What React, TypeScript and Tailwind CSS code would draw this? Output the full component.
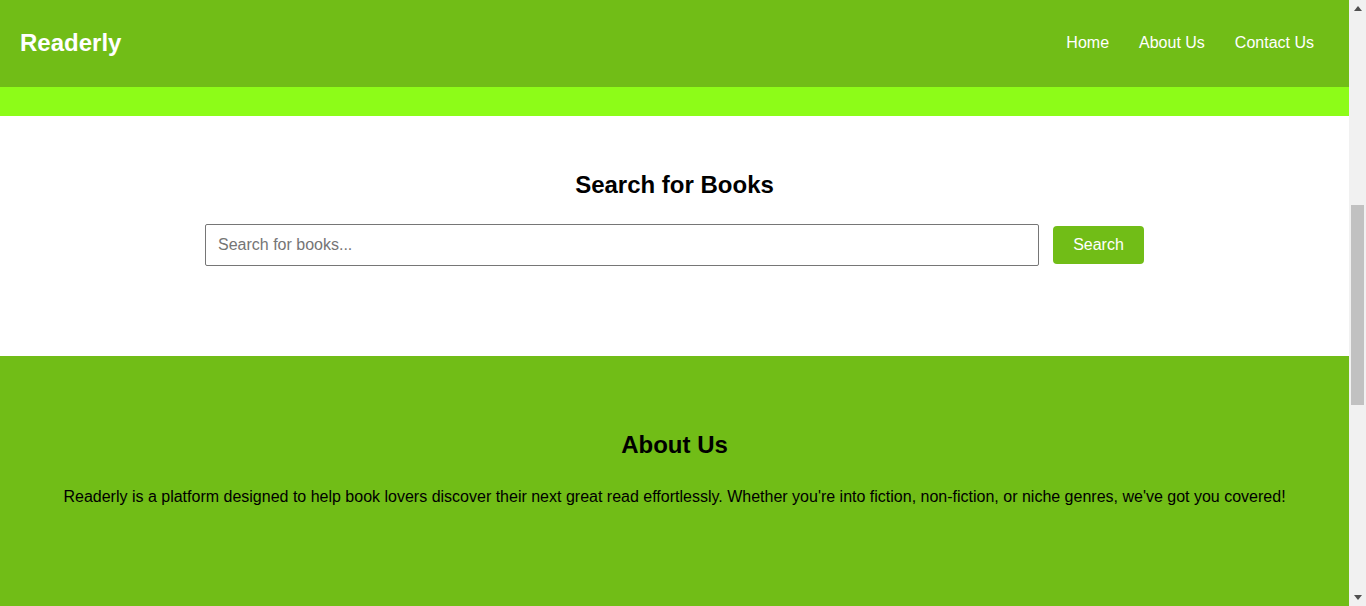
export default function App() {
  return (
    <div className="flex h-[606px] overflow-hidden bg-white font-['Liberation_Sans',Arial,sans-serif]">
      <main className="flex-1">
        <header className="flex h-[87px] items-center justify-between bg-[#71bd17] px-5 pb-[2px]">
          <h1 className="text-[24px] font-bold text-white">Readerly</h1>
          <nav className="mr-[15px] flex gap-[30px] text-[16px] text-white">
            <a href="#">Home</a>
            <a href="#">About Us</a>
            <a href="#">Contact Us</a>
          </nav>
        </header>
        <div className="h-[29px] bg-[#8dfc18]"></div>

        <section className="flex h-[240px] flex-col items-center pt-[55px]">
          <h2 className="text-[24px] font-bold leading-[28px] text-black">
            Search for Books
          </h2>
          <div className="mt-[25px] flex items-center gap-[14px]">
            <input
              type="text"
              placeholder="Search for books..."
              className="h-[42px] w-[834px] rounded-[2px] border border-[#767676] px-3 text-[16px] text-black placeholder:text-[#757575] outline-none"
            />
            <button className="h-[38px] w-[91px] rounded-[4px] bg-[#71bd17] text-[16px] text-white">
              Search
            </button>
          </div>
        </section>

        <section className="flex h-[400px] flex-col items-center bg-[#71bd17] pt-[75px]">
          <h2 className="text-[24px] font-bold leading-[28px] text-black">
            About Us
          </h2>
          <p className="mt-[26px] text-[16px] text-black">
            Readerly is a platform designed to help book lovers discover their
            next great read effortlessly. Whether you're into fiction,
            non-fiction, or niche genres, we've got you covered!
          </p>
        </section>
      </main>

      {/* scrollbar strip, as in the capture */}
      <aside className="flex w-[17px] flex-col items-center bg-[#f1f1f1]">
        <div className="flex h-[17px] items-center justify-center">
          <svg width="8" height="5" viewBox="0 0 8 5">
            <path d="M0 5 L4 0 L8 5 Z" fill="#505050" />
          </svg>
        </div>
        <div className="mt-[188px] h-[200px] w-[13px] bg-[#c1c1c1]"></div>
        <div className="flex-1"></div>
        <div className="flex h-[17px] items-center justify-center">
          <svg width="8" height="5" viewBox="0 0 8 5">
            <path d="M0 0 L8 0 L4 5 Z" fill="#505050" />
          </svg>
        </div>
      </aside>
    </div>
  );
}
